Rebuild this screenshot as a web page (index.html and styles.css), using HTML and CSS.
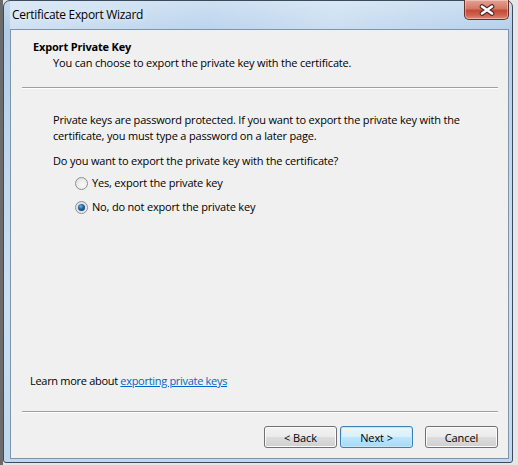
FILE: index.html
```html
<!DOCTYPE html>
<html lang="en">
<head>
    <meta charset="UTF-8">
    <title>Certificate Export Wizard</title>
    <link rel="stylesheet" href="styles.css">
</head>
<body>
    <div class="window">
        <div class="titlebar">
            <span class="title">Certificate Export Wizard</span>
            <button class="close" type="button" aria-label="Close">
                <svg width="18" height="12" viewBox="0 0 18 12">
                    <path d="M4 2.5 L14 9.5 M14 2.5 L4 9.5" stroke="#4a2a28" stroke-width="4.6" stroke-linecap="round" fill="none"/>
                    <path d="M4 2.5 L14 9.5 M14 2.5 L4 9.5" stroke="#ffffff" stroke-width="2.6" stroke-linecap="round" fill="none"/>
                </svg>
            </button>
        </div>

        <div class="client">
            <div class="header">
                <p class="header-title">Export Private Key</p>
                <p class="header-sub">You can choose to export the private key with the certificate.</p>
            </div>
            <div class="separator"></div>

            <div class="body">
                <p>Private keys are password protected. If you want to export the private key with the certificate, you must type a password on a later page.</p>
                <p class="question">Do you want to export the private key with the certificate?</p>

                <label class="radio-row">
                    <span class="radio"></span>
                    Yes, export the private key
                </label>
                <label class="radio-row second">
                    <span class="radio checked"></span>
                    No, do not export the private key
                </label>
            </div>

            <p class="learn">Learn more about <a href="#">exporting private keys</a></p>
            <div class="separator"></div>

            <div class="buttons">
                <button type="button" class="btn">&lt; Back</button>
                <button type="button" class="btn default">Next &gt;</button>
                <button type="button" class="btn cancel">Cancel</button>
            </div>
        </div>
    </div>
</body>
</html>
```

FILE: styles.css
```css
* {
    margin: 0;
    padding: 0;
    box-sizing: border-box;
}

body {
    width: 518px;
    height: 465px;
    overflow: hidden;
    background: linear-gradient(to right, #6b6b6b 0, #6b6b6b 3px, #e6e6e6 3px);
    font-family: 'Open Sans', 'Noto Sans', sans-serif;
    font-size: 11px;
    letter-spacing: -0.18px;
    color: #000;
}

.window {
    margin-left: 3px;
    width: 510px;
    height: 463px;
    border: 1px solid #3d4a5c;
    border-radius: 7px 7px 3px 3px;
    background: linear-gradient(to bottom, #c6dcf0 0, #b2cdea 30px, #bcd6f0 120px, #cbe0f4 300px, #bed8f1 100%);
    padding: 0 3px 3px 6px;
    display: flex;
    flex-direction: column;
}

.titlebar {
    height: 28px;
    display: flex;
    align-items: flex-start;
    background: linear-gradient(100deg, rgba(255,255,255,0.4) 0, rgba(255,255,255,0.12) 40%, rgba(255,255,255,0.32) 65%, rgba(255,255,255,0.05) 100%);
}

.title {
    padding: 5px 0 0 2px;
    font-size: 12px;
    letter-spacing: -0.3px;
    color: #000;
    text-shadow: 0 0 6px rgba(255, 255, 255, 0.9);
}

.close {
    margin-left: auto;
    margin-top: -1px;
    width: 45px;
    height: 20px;
    border: 1px solid #6a2f2a;
    border-top: none;
    border-radius: 0 0 5px 5px;
    background: linear-gradient(to bottom, #e4a293 0, #d47866 45%, #c44b36 55%, #cf6350 80%, #e08c7a 100%);
    box-shadow: inset 0 0 0 1px rgba(255, 255, 255, 0.35);
    display: flex;
    justify-content: center;
    align-items: center;
}

.client {
    flex: 1;
    border: 1px solid #7f93a9;
    background: #f0f0f0;
    display: flex;
    flex-direction: column;
    line-height: 16px;
}

.header {
    padding: 9px 0 0 22px;
}

.header-title {
    font-weight: bold;
}

.header-sub {
    padding-left: 20px;
}

.separator {
    margin: 16px 10px 0 11px;
    height: 2px;
    border-top: 1px solid #a0a0a0;
    border-bottom: 1px solid #ffffff;
}

.body {
    padding: 23px 30px 0 42px;
    flex: 1;
}

.question {
    margin-top: 9px;
}

.radio-row {
    display: flex;
    align-items: center;
    gap: 4px;
    margin: 6px 0 0 22px;
}

.radio-row.second {
    margin-top: 8px;
}

.radio {
    width: 13px;
    height: 13px;
    border-radius: 50%;
    border: 1px solid #8f8f8f;
    background: radial-gradient(circle at 60% 65%, #fafafa 0, #e8e8e8 60%, #d6d6d6 100%);
    display: flex;
    justify-content: center;
    align-items: center;
}

.radio.checked::after {
    content: "";
    width: 7px;
    height: 7px;
    border-radius: 50%;
    background: radial-gradient(circle at 40% 35%, #6fb3e6 0, #1f5f98 45%, #0e3560 100%);
    box-shadow: 0 0 0 1px #cfe2f3;
}

.learn {
    padding-left: 19px;
    letter-spacing: -0.3px;
}

.learn a {
    color: #0066cc;
    text-decoration: underline;
}

.learn + .separator {
    margin-top: 22px;
}

.buttons {
    display: flex;
    justify-content: flex-end;
    padding: 13px 10px 10px 0;
}

.btn {
    width: 73px;
    height: 22px;
    border: 1px solid #707070;
    border-radius: 3px;
    background: linear-gradient(to bottom, #f2f2f2 0, #ebebeb 50%, #dddddd 50%, #cfcfcf 100%);
    box-shadow: inset 0 0 0 1px #fcfcfc;
    font-family: inherit;
    font-size: 11px;
    letter-spacing: -0.1px;
    color: #000;
}

.btn + .btn {
    margin-left: 3px;
}

.btn.default {
    border-color: #3c7fb1;
    background: linear-gradient(to bottom, #eaf6fd 0, #d9f0fc 50%, #bee6fd 50%, #a7d9f5 100%);
    box-shadow: inset 0 0 0 1px #c7e6f8;
}

.btn.cancel {
    margin-left: 12px;
}
```
